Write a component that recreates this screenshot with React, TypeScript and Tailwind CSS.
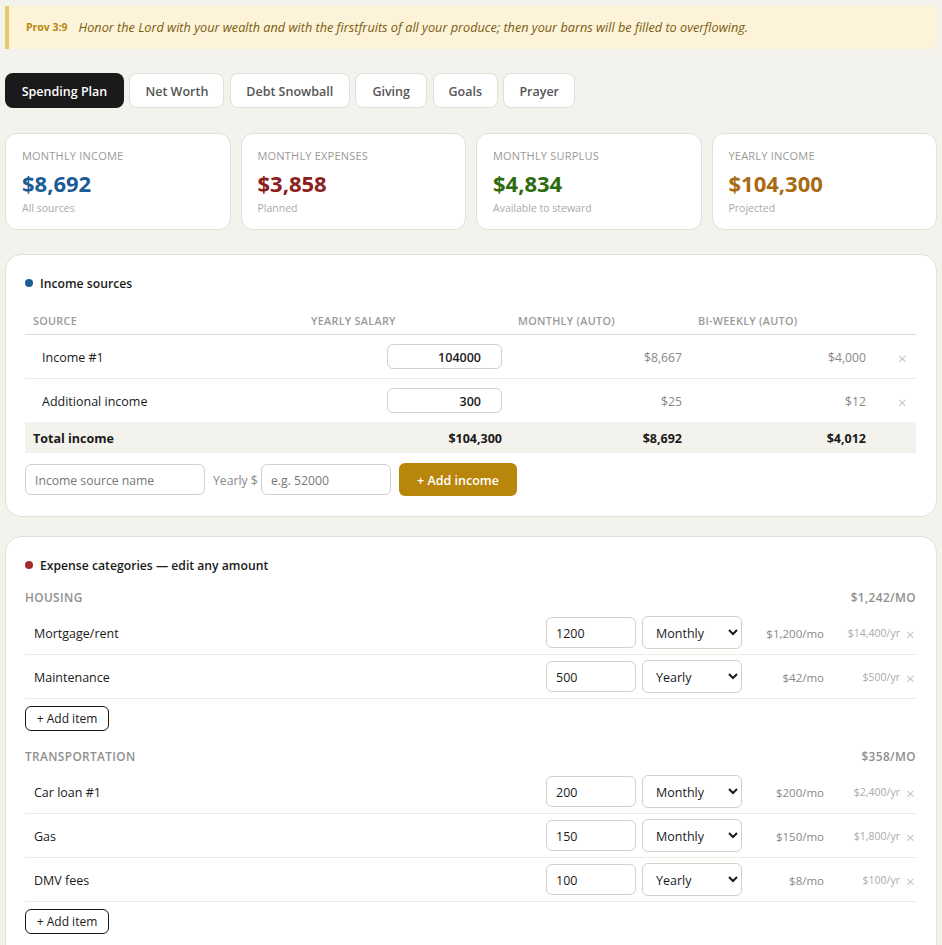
const font = { fontFamily: '"Open Sans", "Noto Sans", sans-serif' };

function Stat({ label, value, sub, color }: { label: string; value: string; sub: string; color: string }) {
  return (
    <div className="h-[97px] rounded-xl border border-[#e2dfd8] bg-white pl-4 pt-[14px]">
      <div className="text-[11px] leading-[16px] tracking-[0.2px] text-[#9a9a9a]">{label}</div>
      <div className={`mt-[4px] text-[22px] font-bold leading-[30px] ${color}`}>{value}</div>
      <div className="mt-[3px] text-[10.5px] leading-[14px] text-[#aaaaaa]">{sub}</div>
    </div>
  );
}

const incomeCols = "grid grid-cols-[278px_207px_180px_184px_42px] items-center";

function IncomeRow({ name, amount, monthly, biweekly, last }: { name: string; amount: string; monthly: string; biweekly: string; last?: boolean }) {
  return (
    <div className={`${incomeCols} ${last ? "h-[43px]" : "h-11 border-b border-[#eeebe4]"} text-[12.5px]`}>
      <div className="pl-[17px] pt-[3px] text-[#1a1a1a]">{name}</div>
      <div className="flex justify-end pr-2">
        <input readOnly value={amount} className="h-[25px] w-[115px] rounded-md border border-[#d4d0c8] bg-white pr-[20px] pt-[2px] text-right text-[12.5px] font-semibold text-[#1a1a1a]" />
      </div>
      <div className="pr-2 pt-[3px] text-right text-[12.2px] text-[#888888]">{monthly}</div>
      <div className="pr-2 pt-[3px] text-right text-[12.2px] text-[#888888]">{biweekly}</div>
      <div className="pl-[24px] pt-[3px] text-[15px] leading-[18px] text-[#c4c4c4]">×</div>
    </div>
  );
}

function ExpenseRow({ name, amount, freq, mo, yr }: { name: string; amount: string; freq: string; mo: string; yr: string }) {
  return (
    <div className="flex h-11 items-center border-b border-[#eeebe4] text-[12.5px]">
      <div className="flex-1 pl-[9px] pt-[4px] text-[#1a1a1a]">{name}</div>
      <input readOnly value={amount} className="h-[31px] w-[90px] rounded-md border border-[#d4d0c8] bg-white pl-[9px] pt-[1px] text-[12.5px] text-[#1a1a1a]" />
      <select defaultValue={freq} className="ml-[6px] h-[33px] w-[100px] rounded-md border border-[#d4d0c8] bg-white pl-[9px] pt-[2px] text-[12.5px] text-[#1a1a1a]">
        <option>Monthly</option>
        <option>Yearly</option>
      </select>
      <div className="w-[82px] pt-[2px] text-right text-[11.5px] text-[#888888]">{mo}</div>
      <div className="w-[76px] pt-[2px] text-right text-[10.5px] text-[#aaaaaa]">{yr}</div>
      <div className="w-4 pl-[6px] pt-[2px] text-[15px] leading-[18px] text-[#c4c4c4]">×</div>
    </div>
  );
}

function Category({ name, total }: { name: string; total: string }) {
  return (
    <div className="mb-1 flex h-[18px] items-center justify-between text-[11.8px] font-semibold uppercase tracking-[0.4px] text-[#8f8f8f]">
      <span>{name}</span>
      <span>{total}</span>
    </div>
  );
}

function AddItem() {
  return (
    <button className="mt-[7px] flex h-[25px] w-[84px] items-center justify-center rounded-md border border-[#1a1a1a] bg-white pt-[1px] text-[12px] text-[#1a1a1a]">+ Add item</button>
  );
}

export default function App() {
  const tabs = ["Net Worth", "Debt Snowball", "Giving", "Goals", "Prayer"];
  return (
    <div style={font} className="h-screen overflow-hidden bg-[#f4f2ed] px-[5px] pt-[6px]">
      <div className="flex h-[43px] items-center rounded-r-md border-l-4 border-[#e8c96a] bg-[#fdf3d8] pl-[17px] text-[12.7px] text-[#7a5c10]">
        <span className="mr-[11px] text-[10.5px] font-bold text-[#b8860b]">Prov 3:9</span>
        <span className="italic">Honor the Lord with your wealth and with the firstfruits of all your produce; then your barns will be filled to overflowing.</span>
      </div>

      <div className="mt-6 flex gap-[5.4px]">
        <button className="h-[35px] w-[119px] rounded-lg bg-[#1a1a1a] pt-[4px] text-[12.5px] font-semibold text-white">Spending Plan</button>
        {tabs.map((t, i) => (
          <button key={t} className={`h-[35px] rounded-lg border border-[#e2dfd8] bg-white pt-[4px] text-[12.5px] font-semibold text-[#555555] ${["w-[95px]", "w-[120px]", "w-[72px]", "w-[65.5px]", "w-[71.5px]"][i]}`}>{t}</button>
        ))}
      </div>

      <div className="mt-[25px] grid grid-cols-4 gap-[10px]">
        <Stat label="MONTHLY INCOME" value="$8,692" sub="All sources" color="text-[#1a5c96]" />
        <Stat label="MONTHLY EXPENSES" value="$3,858" sub="Planned" color="text-[#8b2020]" />
        <Stat label="MONTHLY SURPLUS" value="$4,834" sub="Available to steward" color="text-[#2e6b0e]" />
        <Stat label="YEARLY INCOME" value="$104,300" sub="Projected" color="text-[#a86a12]" />
      </div>

      <div className="mt-6 h-[263px] rounded-2xl border border-[#e2dfd8] bg-white pl-[19px] pr-[20px] pt-[20px]">
        <div className="flex items-center gap-[7px] text-[12.2px] font-semibold leading-[18px] text-[#1a1a1a]">
          <span className="mb-[2px] h-2 w-2 rounded-full bg-[#1a5c96]" />
          Income sources
        </div>
        <div className={`${incomeCols} mt-[14px] h-[28px] border-b border-[#dedbd3] pt-[2px] text-[10.8px] font-semibold tracking-[0.3px] text-[#9a9a9a]`}>
          <div className="pl-2">SOURCE</div>
          <div className="pl-2">YEARLY SALARY</div>
          <div className="pl-2">MONTHLY (AUTO)</div>
          <div className="pl-2">BI-WEEKLY (AUTO)</div>
          <div />
        </div>
        <IncomeRow name="Income #1" amount="104000" monthly="$8,667" biweekly="$4,000" />
        <IncomeRow name="Additional income" amount="300" monthly="$25" biweekly="$12" last />
        <div className={`${incomeCols} h-[31px] bg-[#f4f2ed] pt-[4px] text-[12.5px] font-bold text-[#1a1a1a]`}>
          <div className="pl-2">Total income</div>
          <div className="pr-2 text-right">$104,300</div>
          <div className="pr-2 text-right">$8,692</div>
          <div className="pr-2 text-right">$4,012</div>
          <div />
        </div>
        <div className="mt-[10px] flex items-center text-[12.2px]">
          <input placeholder="Income source name" className="h-[31px] w-[180px] rounded-md border border-[#d4d0c8] bg-white pl-[9px] pt-[1px] text-[12.2px] placeholder:text-[#777777]" />
          <span className="ml-2 w-[48px] pt-[3px] text-[#888888]">Yearly $</span>
          <input placeholder="e.g. 52000" className="h-[31px] w-[130px] rounded-md border border-[#d4d0c8] bg-white pl-[9px] pt-[1px] text-[12.2px] placeholder:text-[#777777]" />
          <button className="ml-2 h-[33px] w-[118px] rounded-md bg-[#b8860b] pt-[4px] text-[12.5px] font-semibold text-white">+ Add income</button>
        </div>
      </div>

      <div className="mt-[19px] h-[600px] rounded-2xl border border-[#e2dfd8] bg-white pl-[19px] pr-[20px] pt-[20px]">
        <div className="flex items-center gap-[7px] text-[12.2px] font-semibold leading-[18px] text-[#1a1a1a]">
          <span className="mb-[2px] h-2 w-2 rounded-full bg-[#a12b2b]" />
          Expense categories — edit any amount
        </div>
        <div className="mt-[14px]">
          <Category name="Housing" total="$1,242/mo" />
          <ExpenseRow name="Mortgage/rent" amount="1200" freq="Monthly" mo="$1,200/mo" yr="$14,400/yr" />
          <ExpenseRow name="Maintenance" amount="500" freq="Yearly" mo="$42/mo" yr="$500/yr" />
          <AddItem />
        </div>
        <div className="mt-[17px]">
          <Category name="Transportation" total="$358/mo" />
          <ExpenseRow name="Car loan #1" amount="200" freq="Monthly" mo="$200/mo" yr="$2,400/yr" />
          <ExpenseRow name="Gas" amount="150" freq="Monthly" mo="$150/mo" yr="$1,800/yr" />
          <ExpenseRow name="DMV fees" amount="100" freq="Yearly" mo="$8/mo" yr="$100/yr" />
          <AddItem />
        </div>
      </div>
    </div>
  );
}
